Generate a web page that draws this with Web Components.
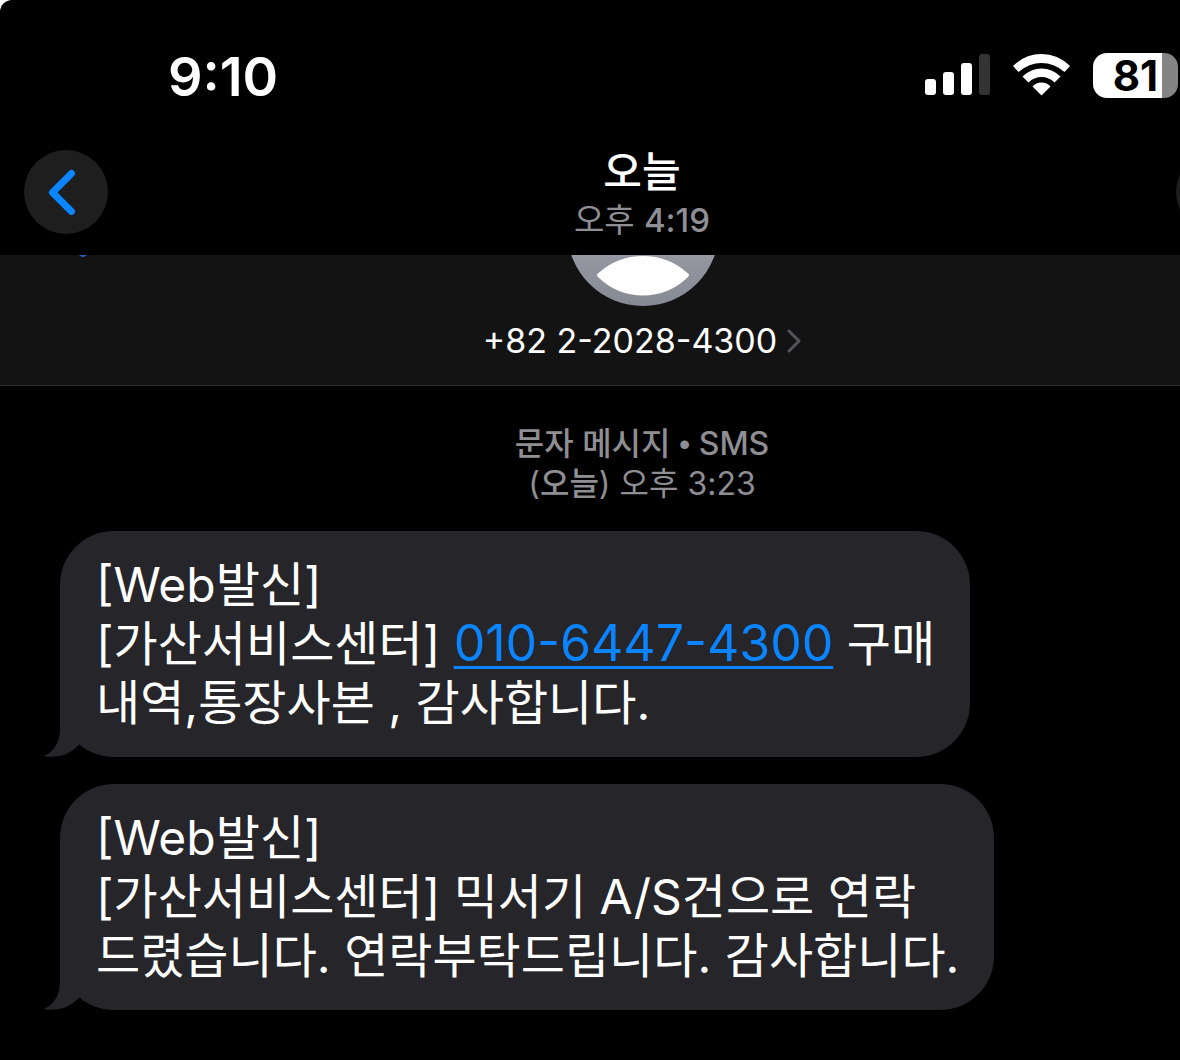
<!DOCTYPE html>
<html lang="ko">
<head>
<meta charset="utf-8">
<meta name="viewport" content="width=device-width, initial-scale=1">
<title>메시지</title>
<style>
  body {
    margin: 0;
    background: #fff;
    font-family: Inter, "Noto Sans CJK KR", sans-serif;
  }
  b { font-weight: 500; }
  .dot { font-family: "Liberation Sans", sans-serif; line-height: 1; }
</style>
</head>
<body>
<phone-screen>
  <status-bar slot="top" data-time="9:10" data-battery="81"></status-bar>
  <nav-header slot="top">
    <span slot="title">오늘</span>
    <span slot="subtitle">오후 <b>4:19</b></span>
  </nav-header>
  <contact-strip slot="top">+82 2-2028-4300</contact-strip>
  <message-stamp>
    <span slot="service">문자 메시지 <span class="dot">•</span> <b>SMS</b></span>
    <span slot="time">(<b>오늘</b>) 오후 3:23</span>
  </message-stamp>
  <message-bubble>[Web발신]<br>[가산서비스센터] <a href="tel:010-6447-4300">010-6447-4300</a> 구매<br>내역,통장사본 , 감사합니다.</message-bubble>
  <message-bubble>[Web발신]<br>[가산서비스센터] 믹서기 A/S건으로 연락<br>드렸습니다. 연락부탁드립니다. 감사합니다.</message-bubble>
</phone-screen>

<script>
class PhoneScreen extends HTMLElement {
  constructor() {
    super();
    this.attachShadow({ mode: "open" });
  }

  connectedCallback() {
    this.shadowRoot.innerHTML = `
      <style>
        :host {
          display: block;
          min-height: 100vh;
          overflow: hidden;
          background: #000;
          color: #fff;
          border-top-left-radius: 12px;
        }
        /* the screen runs on past the right edge of the window */
        .screen { margin-right: -104px; }
        main {
          display: flex;
          flex-direction: column;
          align-items: flex-start;
          gap: 27px;
          padding: 38px 60px 50px;
        }
      </style>
      <div class="screen">
        <slot name="top"></slot>
        <main><slot></slot></main>
      </div>
    `;
  }
}

class StatusBar extends HTMLElement {
  constructor() {
    super();
    this.attachShadow({ mode: "open" });
  }

  connectedCallback() {
    this.render(this.getAttribute("data-time"), this.getAttribute("data-battery"));
  }

  render(time, battery) {
    this.shadowRoot.innerHTML = `
      <style>
        :host {
          display: flex;
          justify-content: space-between;
          align-items: center;
          height: 150px;
          box-sizing: border-box;
          padding: 0 106px 0 168px;
        }
        .time { font-size: 54px; line-height: 64px; padding-top: 4px; font-weight: 600; }
        .icons { display: flex; align-items: center; gap: 22px; }
        svg { display: block; }
        .battery {
          width: 85px;
          height: 45px;
          box-sizing: border-box;
          border-radius: 14px;
          background: linear-gradient(to right, #fff 69px, #848484 69px);
          color: #000;
          font-size: 42px;
          line-height: 45px;
          font-weight: 700;
          text-align: center;
        }
      </style>
      <span class="time">${time}</span>
      <div class="icons">
        <svg width="65" height="42" viewBox="0 0 65 42" fill="#fff">
          <rect y="25" width="11" height="16" rx="3"/>
          <rect x="18" y="18" width="11" height="23" rx="3"/>
          <rect x="36" y="9" width="11" height="32" rx="3"/>
          <rect x="54" width="11" height="41" rx="3" fill="#333"/>
        </svg>
        <svg width="59" height="42" viewBox="0 0 59 42" fill="#fff">
          <path d="M1 12Q13 0 29.500 0Q46 0 58 12L52.500 18Q42 9 29.500 9Q17 9 6.500 18Z"/>
          <path d="M10.500 22.500Q19 14.500 29.500 14.500Q40 14.500 48.500 22.500L42.500 28.500Q37 23 29.500 23Q22 23 16.500 28.500Z"/>
          <path d="M20.500 32.500Q24 28.500 29.500 28.500Q35 28.500 38.500 32.500L29.500 41.500Z"/>
        </svg>
        <div class="battery">${battery}</div>
      </div>
    `;
  }
}

class NavHeader extends HTMLElement {
  constructor() {
    super();
    this.attachShadow({ mode: "open" });
  }

  connectedCallback() {
    this.shadowRoot.innerHTML = `
      <style>
        :host {
          display: flex;
          justify-content: space-between;
          align-items: flex-start;
          height: 105px;
          box-sizing: border-box;
          padding: 0 24px;
        }
        button {
          display: flex;
          align-items: center;
          justify-content: center;
          width: 84px;
          height: 84px;
          padding: 0 8px 0 0;
          border: 0;
          border-radius: 50%;
          background: #1e1e1e;
        }
        .titles { text-align: center; }
        .title { font-size: 42px; line-height: 44px; font-weight: 500; }
        .subtitle { margin-top: 6px; font-size: 33px; line-height: 40px; color: #8e8e93; }
      </style>
      <button aria-label="뒤로">
        <svg width="28" height="46" viewBox="0 0 28 46" fill="none" stroke="#0a84ff" stroke-width="7" stroke-linecap="round" stroke-linejoin="round">
          <path d="M23.500 4.500L4.500 23.500L23.500 42.500"/>
        </svg>
      </button>
      <div class="titles">
        <div class="title"><slot name="title"></slot></div>
        <div class="subtitle"><slot name="subtitle"></slot></div>
      </div>
      <button aria-label="더 보기"></button>
    `;
  }
}

class ContactStrip extends HTMLElement {
  constructor() {
    super();
    this.attachShadow({ mode: "open" });
  }

  connectedCallback() {
    this.shadowRoot.innerHTML = `
      <style>
        :host {
          display: flex;
          flex-direction: column;
          align-items: center;
          height: 131px;
          box-sizing: border-box;
          border-bottom: 1px solid #2b2b2d;
          background: #131313;
          position: relative;
        }
        svg { display: block; }
        .name {
          display: flex;
          align-items: center;
          gap: 10px;
          margin-top: 15px;
          font-size: 34px;
          line-height: 40px;
        }
        /* bottom of the back arrow that is scrolled under the header */
        .under { position: absolute; left: 79px; top: 0; }
      </style>
      <svg class="under" width="8" height="2" viewBox="0 0 8 2"><path d="M0 0H8Q4 4 0 0Z" fill="#2a62c4"/></svg>
      <svg width="146" height="51" viewBox="0 0 146 51">
        <defs>
          <linearGradient id="g" x1="0" y1="0" x2="0" y2="1">
            <stop offset=".6" stop-color="#989aa5"/>
            <stop offset="1" stop-color="#858a94"/>
          </linearGradient>
        </defs>
        <circle cx="74" cy="-25" r="76" fill="url(#g)"/>
        <path d="M29 18.500Q48 1 74 1Q100 1 119 18.500Q121 20 119 22Q100 40.500 74 40.500Q48 40.500 29 22Q27 20 29 18.500Z" fill="#fff"/>
      </svg>
      <div class="name">
        <slot></slot>
        <svg width="14" height="24" viewBox="0 0 14 24" fill="none" stroke="#545457" stroke-width="3" stroke-linecap="round" stroke-linejoin="round">
          <path d="M2 2L12 12L2 22"/>
        </svg>
      </div>
    `;
  }
}

class MessageStamp extends HTMLElement {
  constructor() {
    super();
    this.attachShadow({ mode: "open" });
  }

  connectedCallback() {
    this.shadowRoot.innerHTML = `
      <style>
        :host {
          display: block;
          align-self: stretch;
          text-align: center;
          font-size: 32px;
          line-height: 40px;
          color: #8e8e93;
        }
        .service { font-weight: 500; }
        ::slotted(span) { display: block; }
      </style>
      <div class="service"><slot name="service"></slot></div>
      <slot name="time"></slot>
    `;
  }
}

class MessageBubble extends HTMLElement {
  constructor() {
    super();
    this.attachShadow({ mode: "open" });
  }

  connectedCallback() {
    this.shadowRoot.innerHTML = `
      <style>
        :host {
          display: block;
          position: relative;
          padding: 24px 35px 25px 36px;
          border-radius: 54px;
          background: #26252a;
          font-size: 48px;
          line-height: 59px;
          white-space: nowrap;
        }
        ::slotted(a) {
          font-size: 50px;
          line-height: 1;
          color: #0a84ff;
          text-decoration: underline;
          text-decoration-thickness: 3px;
          text-underline-offset: 5px;
        }
        .tail { position: absolute; left: -16px; bottom: 0; }
      </style>
      <svg class="tail" width="36" height="60" viewBox="0 0 36 60">
        <path d="M16 0V32C16 46 9 55 0 59Q20 63 35 48L36 0Z" fill="#26252a"/>
      </svg>
      <slot></slot>
    `;
  }
}

customElements.define("phone-screen", PhoneScreen);
customElements.define("status-bar", StatusBar);
customElements.define("nav-header", NavHeader);
customElements.define("contact-strip", ContactStrip);
customElements.define("message-stamp", MessageStamp);
customElements.define("message-bubble", MessageBubble);
</script>
</body>
</html>
